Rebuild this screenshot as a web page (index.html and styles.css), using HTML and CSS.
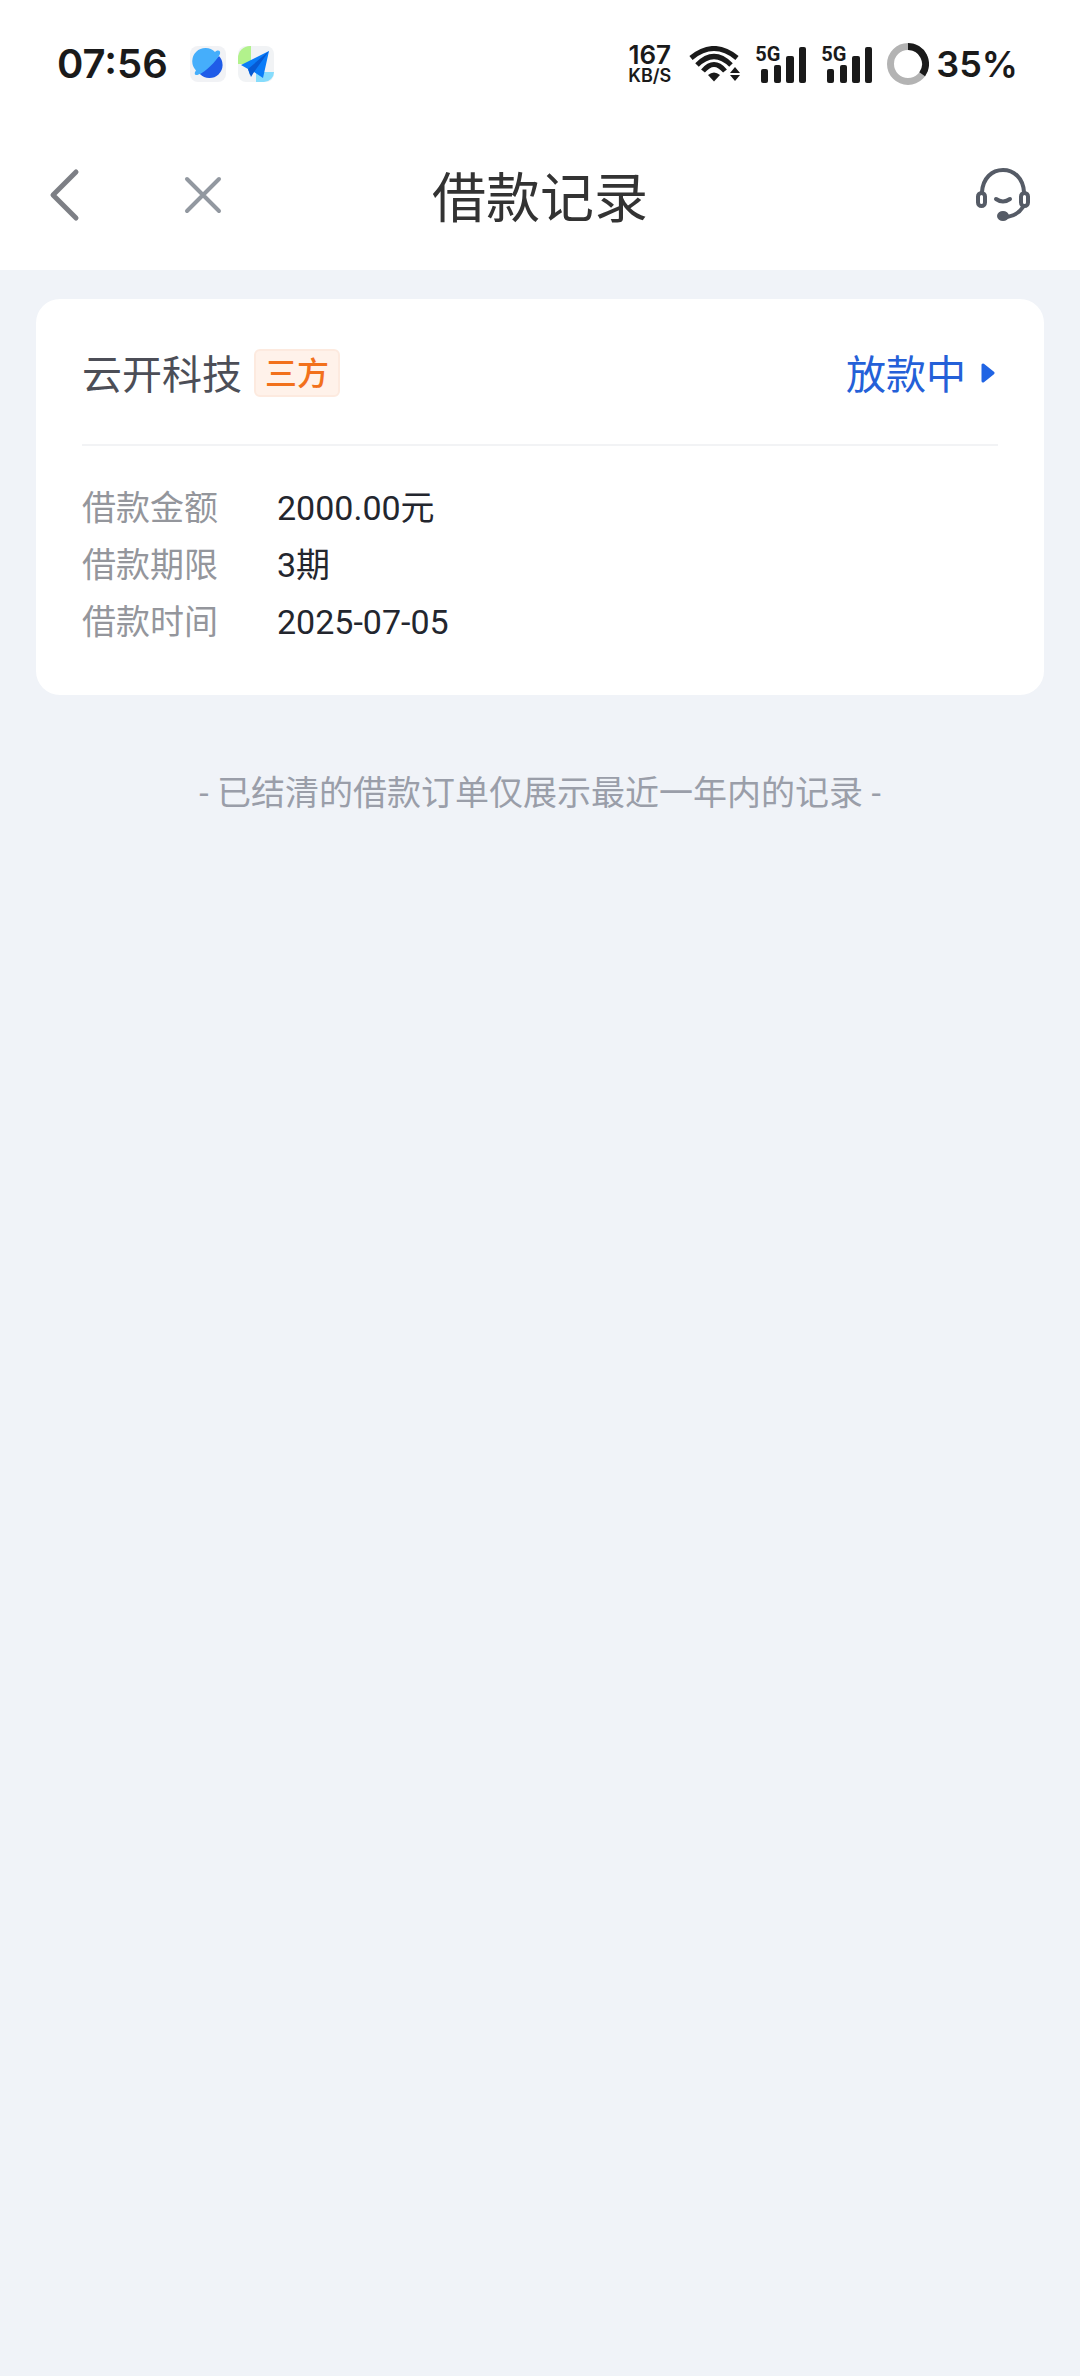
FILE: index.html
```html
<!DOCTYPE html>
<html lang="zh-CN">
<head>
<meta charset="utf-8">
<meta name="viewport" content="width=device-width, initial-scale=1">
<title>借款记录</title>
<link rel="stylesheet" href="styles.css">
</head>
<body>
<div class="status-bar">
  <div class="status-left">
    <span class="clock">07:56</span>
    <svg class="app-icon" width="36" height="36" viewBox="0 0 36 36" aria-hidden="true">
      <rect width="36" height="36" rx="8" fill="#f1f2f5"/>
      <circle cx="17.500" cy="18" r="12.500" fill="#2f9cf8"/>
      <path d="M10 28 29 10A12.500 12.500 0 0 1 10 28Z" fill="#1f5ce8"/>
      <path d="M6 24.500C3.500 28 5 30 8.500 28.500C16 26 26 15 29.500 9C31.500 5 28.500 3 25 6A12.500 12.500 0 0 0 6 24.500Z" fill="#45aefb"/>
    </svg>
    <svg class="app-icon" width="36" height="36" viewBox="0 0 36 36" aria-hidden="true">
      <rect width="36" height="36" rx="8" fill="#f1f3f5"/>
      <path d="M0 18V12A12 12 0 0 1 12 0H13V18Z" fill="#b2f28c"/>
      <path d="M18 36V26H36A10 10 0 0 1 26 36Z" fill="#86dcfc"/>
      <path d="M31 5 3 19 10 23 12 29 16 26 25 32Z" fill="#0a7cf8"/>
      <path d="M31 5 10 23 13 31 16 26Z" fill="#0759d2"/>
    </svg>
  </div>
  <div class="status-right">
    <div class="speed"><span class="speed-value">167</span><span class="speed-unit">KB/S</span></div>
    <svg class="wifi" width="52" height="36" viewBox="0 0 52 36" aria-hidden="true">
      <g fill="none" stroke="#1a1a1a" stroke-width="5">
        <path d="M2 12Q25 -7 48 12"/>
        <path d="M8 19Q25 2 42 19"/>
        <path d="M14 25Q25 12 36 25"/>
      </g>
      <path d="M19 29Q25 24 31 29L25 35.500Z" fill="#1a1a1a"/>
      <path d="M46 21 51 27H41ZM46 35 51 29H41Z" fill="#1a1a1a"/>
    </svg>
    <div class="signal">
      <span class="signal-label">5G</span>
      <svg width="52" height="37" viewBox="0 0 52 37" fill="#1a1a1a" aria-hidden="true"><rect x="6" y="23" width="7" height="14" rx="2"/><rect x="19" y="19" width="7" height="18" rx="2"/><rect x="31" y="10" width="8" height="27" rx="2"/><rect x="44" y="1" width="7" height="36" rx="2"/></svg>
    </div>
    <div class="signal">
      <span class="signal-label">5G</span>
      <svg width="52" height="37" viewBox="0 0 52 37" fill="#1a1a1a" aria-hidden="true"><rect x="6" y="23" width="7" height="14" rx="2"/><rect x="19" y="19" width="7" height="18" rx="2"/><rect x="31" y="10" width="8" height="27" rx="2"/><rect x="44" y="1" width="7" height="36" rx="2"/></svg>
    </div>
    <div class="battery">
      <svg width="42" height="42" viewBox="0 0 42 42" fill="none" stroke-width="7" aria-hidden="true"><circle cx="21" cy="21" r="17.500" stroke="#b3b3b3"/><path d="M21 3.500A17.500 17.500 0 0 1 35.200 31.300" stroke="#1a1a1a"/></svg>
      <span class="battery-level">35%</span>
    </div>
  </div>
</div>

<header class="nav">
  <div class="nav-left">
    <button class="icon-button" type="button" aria-label="返回">
      <svg width="32" height="54" viewBox="0 0 32 54" fill="none" stroke="#7d7f85" stroke-width="5" stroke-linecap="round" stroke-linejoin="round" aria-hidden="true"><path d="M28 4 5 27 28 50"/></svg>
    </button>
    <button class="icon-button" type="button" aria-label="关闭">
      <svg width="38" height="38" viewBox="0 0 38 38" fill="none" stroke="#9298a0" stroke-width="4" stroke-linecap="round" aria-hidden="true"><path d="M3 3 35 35M35 3 3 35"/></svg>
    </button>
  </div>
  <h1 class="nav-title">借款记录</h1>
  <div class="nav-right">
    <button class="icon-button" type="button" aria-label="客服">
      <svg width="56" height="54" viewBox="0 0 56 54" fill="none" stroke="#555b66" stroke-width="4" stroke-linecap="round" aria-hidden="true">
        <path d="M6 24C7 10 16 2 27 2S47 10 48 24"/>
        <rect x="2" y="25" width="7" height="13" rx="3.500"/>
        <rect x="45" y="25" width="7" height="13" rx="3.500"/>
        <path d="M20 31Q27 36 34 31"/>
        <path d="M47 39Q42 47 31 49"/>
        <ellipse cx="27" cy="48" rx="4" ry="3" fill="#555b66"/>
      </svg>
    </button>
  </div>
</header>

<main class="content">
  <article class="card">
    <div class="card-head">
      <h2 class="company">云开科技</h2>
      <span class="tag">三方</span>
      <a class="state" href="#"><span class="state-text">放款中</span>
        <svg width="14" height="22" viewBox="0 0 14 22" aria-hidden="true"><path d="M2 3V19L12 11Z" fill="#2064e4" stroke="#2064e4" stroke-width="3" stroke-linejoin="round"/></svg>
      </a>
    </div>
    <dl class="details">
      <dt>借款金额</dt><dd>2000.00元</dd>
      <dt>借款期限</dt><dd>3期</dd>
      <dt>借款时间</dt><dd>2025-07-05</dd>
    </dl>
  </article>
  <p class="note">- 已结清的借款订单仅展示最近一年内的记录 -</p>
</main>
</body>
</html>
```

FILE: styles.css
```css
* {
  box-sizing: border-box;
}

body {
  margin: 0;
  min-height: 100vh;
  background: #f0f3f8;
  color: #23262e;
  font-family: Roboto, "Noto Sans CJK SC", sans-serif;
}

svg {
  display: block;
  flex: none;
}

/* Status bar */
.status-bar {
  display: flex;
  justify-content: space-between;
  align-items: center;
  height: 128px;
  padding: 0 62px 0 57px;
  background: #fff;
  color: #1a1a1a;
  font-family: Inter, sans-serif;
  font-weight: 600;
}

.status-left,
.status-right,
.battery {
  display: flex;
  align-items: center;
}

.status-left {
  gap: 12px;
}

.clock {
  margin-right: 10px;
  font-size: 40px;
  line-height: 48px;
}

.status-right {
  gap: 14px;
}

.speed {
  display: flex;
  flex-direction: column;
  align-items: center;
  margin-right: 4px;
}

.speed-value {
  font-size: 26px;
  line-height: 24px;
}

.speed-unit {
  font-size: 18px;
  line-height: 18px;
}

.signal {
  position: relative;
}

.signal-label {
  position: absolute;
  top: 0;
  left: 0;
  font-family: Roboto, sans-serif;
  font-size: 20px;
  font-weight: 700;
  line-height: 16px;
}

.battery {
  gap: 7px;
}

.battery-level {
  font-size: 36px;
  line-height: 44px;
}

/* Navigation */
.nav {
  display: grid;
  grid-template-columns: 1fr auto 1fr;
  align-items: center;
  height: 142px;
  padding: 0 48px 8px;
  background: #fff;
}

.nav-left {
  display: flex;
  align-items: center;
  gap: 104px;
}

.nav-right {
  display: flex;
  justify-content: flex-end;
}

.nav-title {
  margin: 0;
  padding-top: 10px;
  color: #333;
  font-size: 54px;
  font-weight: 400;
  line-height: 72px;
}

.icon-button {
  padding: 0;
  border: 0;
  background: none;
  cursor: pointer;
}

/* Loan records */
.content {
  padding: 29px 36px;
}

.card {
  padding: 0 46px 44px;
  border-radius: 24px;
  background: #fff;
}

.card-head {
  display: flex;
  align-items: center;
  height: 147px;
  padding-top: 2px;
  border-bottom: 2px solid #f2f3f5;
}

.company,
.state-text {
  margin: 0;
  padding-top: 6px;
  font-size: 40px;
  font-weight: 400;
  line-height: 56px;
}

.company {
  color: #4c4e57;
}

.tag {
  margin-left: 12px;
  padding: 2px 9px 0;
  border: 2px solid #fdeadf;
  border-radius: 6px;
  background: #fff2ea;
  color: #f2711c;
  font-size: 32px;
  font-weight: 500;
  line-height: 42px;
}

.state {
  display: flex;
  align-items: center;
  gap: 15px;
  margin-left: auto;
  padding-right: 3px;
  color: #2460d8;
  text-decoration: none;
}

.details {
  display: grid;
  grid-template-columns: 136px 1fr;
  column-gap: 59px;
  margin: 0;
  padding-top: 34px;
  font-size: 34px;
  line-height: 57px;
}

.details dt {
  color: #94969c;
}

.details dd {
  margin: 0;
}

.note {
  margin: 70px 0 0;
  color: #9a9ea9;
  font-size: 34px;
  line-height: 57px;
  text-align: center;
}
```
